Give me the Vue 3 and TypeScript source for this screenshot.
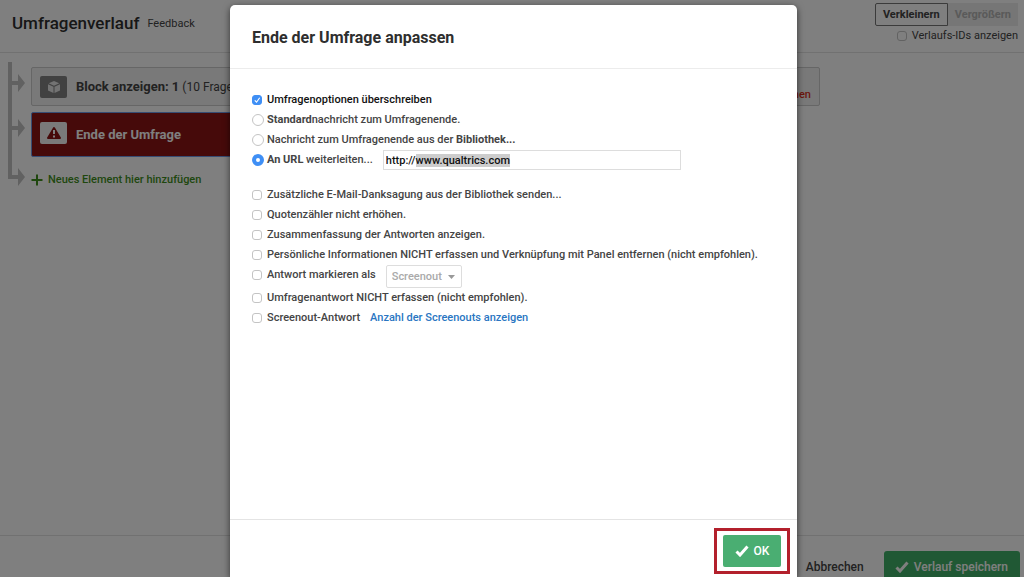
<script setup lang="ts">
import { nextTick, onMounted, ref } from 'vue'

type Target = 'standard' | 'library' | 'url'

interface Option {
  id: string
  label: string
  kind?: 'flag' | 'screenout'
}

const override = ref(true)
const target = ref<Target>('url')
const url = ref('http://www.qualtrics.com')
const urlInput = ref<HTMLInputElement | null>(null)
const flag = ref('Screenout')
const showIds = ref(false)
const checked = ref<string[]>([])

const options: Option[] = [
  { id: 'mail', label: 'Zusätzliche E-Mail-Danksagung aus der Bibliothek senden...' },
  { id: 'quota', label: 'Quotenzähler nicht erhöhen.' },
  { id: 'summary', label: 'Zusammenfassung der Antworten anzeigen.' },
  {
    id: 'anonymize',
    label: 'Persönliche Informationen NICHT erfassen und Verknüpfung mit Panel entfernen (nicht empfohlen).',
  },
  { id: 'flag', label: 'Antwort markieren als', kind: 'flag' },
  { id: 'discard', label: 'Umfragenantwort NICHT erfassen (nicht empfohlen).' },
  { id: 'screenout', label: 'Screenout-Antwort', kind: 'screenout' },
]

onMounted(async () => {
  await nextTick()
  const field = urlInput.value
  if (!field) return
  field.focus()
  field.setSelectionRange('http://'.length, field.value.length)
})
</script>

<template>
  <div class="app">
    <div class="page">
      <header class="page-head">
        <h1>Umfragenverlauf</h1>
        <a class="feedback" href="#">Feedback</a>
        <div class="tools">
          <div class="zoom">
            <button type="button" class="zoom-out">Verkleinern</button>
            <button type="button" class="zoom-in" disabled>Vergrößern</button>
          </div>
          <label class="ids"><input v-model="showIds" type="checkbox" />Verlaufs-IDs anzeigen</label>
        </div>
      </header>

      <main class="flow">
        <svg class="tree" width="18" height="126" viewBox="0 0 18 126" aria-hidden="true">
          <path
            fill="#c2c2c2"
            d="M0 0h4v19h6v-7l7 9-7 9v-7H4v41h6v-7l7 9-7 9v-7H4v45h6v-7l7 9-7 9v-7H0z"
          />
        </svg>
        <div class="elements">
          <section class="element">
            <span class="badge badge-block">
              <svg width="14" height="14" viewBox="0 0 14 14" aria-hidden="true">
                <path fill="#e6e6e6" d="M7 1l5.300 2.300L7 5.700 1.700 3.300zM1 4.300l5.500 2.500v6.200L1 10.400zM13 4.300L7.500 6.800V13L13 10.400z" />
              </svg>
            </span>
            <strong>Block anzeigen: 1</strong>
            <span class="count">(10 Fragen)</span>
            <a class="remove" href="#">Entfernen</a>
          </section>
          <section class="element element-end">
            <span class="badge badge-end">
              <svg width="16" height="14" viewBox="0 0 16 14" aria-hidden="true">
                <path fill="#8c1414" stroke="#8c1414" stroke-width="2" stroke-linejoin="round" d="M8 2l6 10H2z" />
                <path stroke="#fff" stroke-width="2" d="M8 4v4M8 9.500v2" />
              </svg>
            </span>
            <strong>Ende der Umfrage</strong>
          </section>
          <button type="button" class="add">
            <svg width="12" height="12" viewBox="0 0 12 12" aria-hidden="true">
              <path stroke="#3f8f1c" stroke-width="2" d="M6 0.500v11M0.500 6h11" />
            </svg>
            Neues Element hier hinzufügen
          </button>
        </div>
      </main>

      <footer class="page-foot">
        <button type="button" class="cancel">Abbrechen</button>
        <button type="button" class="save">
          <svg width="14" height="12" viewBox="0 0 14 12" aria-hidden="true">
            <path fill="none" stroke="#fff" stroke-width="3" d="M1.500 6.500l3.500 3.500 7.500-8.500" />
          </svg>
          Verlauf speichern
        </button>
      </footer>
    </div>

    <div class="overlay">
      <div class="dialog" role="dialog" aria-modal="true" aria-labelledby="dialog-title">
        <h2 id="dialog-title">Ende der Umfrage anpassen</h2>
        <form class="body" @submit.prevent>
          <label class="row row-strong"><input v-model="override" type="checkbox" />Umfragenoptionen überschreiben</label>
          <label class="row">
            <input v-model="target" type="radio" name="target" value="standard" />
            <span><b>Standard</b>nachricht zum Umfragenende.</span>
          </label>
          <label class="row">
            <input v-model="target" type="radio" name="target" value="library" />
            <span>Nachricht zum Umfragenende aus der <b>Bibliothek...</b></span>
          </label>
          <div class="row">
            <label class="choice">
              <input v-model="target" type="radio" name="target" value="url" />
              <span><b>An URL</b> weiterleiten...</span>
            </label>
            <input ref="urlInput" v-model="url" class="url" type="text" aria-label="URL" />
          </div>

          <div class="options">
            <div v-for="option in options" :key="option.id" class="row">
              <label class="choice">
                <input v-model="checked" type="checkbox" :value="option.id" />{{ option.label }}
              </label>
              <span v-if="option.kind === 'flag'" class="picker">
                <select v-model="flag" disabled aria-label="Markierung">
                  <option>Screenout</option>
                </select>
                <svg width="7" height="4" viewBox="0 0 7 4" aria-hidden="true"><path fill="#999" d="M0 0h7L3.500 4z" /></svg>
              </span>
              <a v-if="option.kind === 'screenout'" class="link" href="#">Anzahl der Screenouts anzeigen</a>
            </div>
          </div>
        </form>
        <div class="dialog-foot">
          <div class="marker">
            <button type="button" class="ok">
              <svg width="14" height="12" viewBox="0 0 14 12" aria-hidden="true">
                <path fill="none" stroke="#fff" stroke-width="3" d="M1.500 6.500l3.500 3.500 7.500-8.500" />
              </svg>
              OK
            </button>
          </div>
        </div>
      </div>
    </div>
  </div>
</template>

<style>
body {
  margin: 0;
  overflow: hidden;
}
</style>

<style scoped>
* {
  box-sizing: border-box;
}
.app {
  position: relative;
  font-family: Roboto, 'Liberation Sans', sans-serif;
  font-size: 11px;
  font-weight: 500;
  line-height: 20px;
  color: #444;
}
button,
input,
select {
  font: inherit;
  color: inherit;
  margin: 0;
}
button {
  border: 0;
  background: none;
  padding: 0;
}
a {
  text-decoration: none;
  color: inherit;
}
h1,
h2 {
  margin: 0;
  color: #2e2e2e;
}
input[type='checkbox'],
input[type='radio'] {
  appearance: none;
  flex: none;
  width: 10px;
  height: 10px;
  margin-right: 1px;
  border: 1px solid #c4c4c4;
  border-radius: 3px;
  background: #fff;
}
input[type='radio'] {
  width: 12px;
  height: 12px;
  margin-right: -1px;
  border-radius: 50%;
}
input[type='radio']:checked {
  border: 4px solid #3f8ff5;
}
input[type='checkbox']:checked {
  border-color: #3f8ff5;
  background: #3f8ff5
    url("data:image/svg+xml,%3Csvg xmlns='http://www.w3.org/2000/svg' viewBox='0 0 9 9'%3E%3Cpath d='M2 5l2 2 3.500-5' fill='none' stroke='white' stroke-width='1.300'/%3E%3C/svg%3E");
}

.page {
  display: flex;
  flex-direction: column;
  min-height: 100vh;
  background: #fff;
}
.page-head {
  display: flex;
  align-items: flex-start;
  padding: 3px 6px 6px 12px;
  border-bottom: 1px solid #e2e2e2;
}
h1 {
  font-size: 17px;
  font-weight: 500;
  line-height: 40px;
}
.feedback {
  margin-left: 8px;
  font-weight: 400;
  line-height: 41px;
}
.tools {
  display: flex;
  flex-direction: column;
  align-items: flex-end;
  margin-left: auto;
}
.zoom {
  display: flex;
  font-weight: 700;
}
.zoom-out {
  height: 23px;
  padding: 0 7px;
  border: 1px solid #777;
  border-radius: 2px 0 0 2px;
}
.zoom-in {
  height: 23px;
  padding: 0 7px;
  background: #ececec;
  color: #b4b4b4;
}
.ids {
  display: flex;
  align-items: center;
  gap: 4px;
  font-weight: 400;
}
.page-foot {
  display: flex;
  align-items: flex-end;
  justify-content: flex-end;
  gap: 20px;
  height: 42px;
  padding-right: 4px;
  border-top: 1px solid #e2e2e2;
  font-size: 12px;
}
.cancel {
  height: 26px;
  padding-top: 5px;
}
.save {
  display: flex;
  align-items: center;
  gap: 5px;
  height: 26px;
  padding: 5px 12px 0 11px;
  border-radius: 3px 3px 0 0;
  background: #41b169;
  color: #fff;
}

.flow {
  display: flex;
  flex: 1;
  align-items: flex-start;
  gap: 5px;
  padding: 9px 8px;
}
.tree {
  flex: none;
}
.elements {
  display: flex;
  flex-direction: column;
  align-items: flex-start;
  gap: 6px;
  width: 789px;
  padding-top: 5px;
}
.element {
  display: flex;
  align-items: center;
  width: 100%;
  height: 39px;
  padding: 0 8px;
  border: 1px solid #ccc;
  border-radius: 2px;
  background: #f2f2f2;
}
.element strong {
  margin: 0 3px 0 9px;
  font-size: 13px;
  font-weight: 700;
}
.count {
  font-weight: 400;
  font-size: 12px;
}
.remove {
  align-self: flex-end;
  margin-left: auto;
  color: #d9301a;
}
.element-end {
  width: 700px;
  height: 45px;
  border: 1px solid #6f9ae8;
  background: #8c1414;
  color: #fff;
}
.badge {
  display: flex;
  align-items: center;
  justify-content: center;
  width: 27px;
  height: 22px;
  border-radius: 2px;
}
.badge-block {
  background: #828282;
}
.badge-end {
  margin-bottom: 4px;
  background: #f4f4f4;
}
.add {
  display: flex;
  align-items: center;
  gap: 5px;
  height: 34px;
  color: #3f8f1c;
}

.overlay {
  position: absolute;
  inset: 0;
  display: grid;
  grid-template-columns: 230fr 567px 227fr;
  padding-top: 5px;
  background: rgba(0, 0, 0, 0.5);
}
.dialog {
  grid-column: 2;
  display: flex;
  flex-direction: column;
  border-radius: 5px 5px 0 0;
  background: #fff;
  box-shadow: 0 2px 7px rgba(0, 0, 0, 0.6);
}
h2 {
  padding: 3px 22px 0;
  border-bottom: 1px solid #ececec;
  font-size: 16px;
  font-weight: 700;
  line-height: 60px;
}
.body {
  flex: 1;
  padding: 21px 22px 0;
}
.row {
  display: flex;
  align-items: flex-start;
  gap: 4px;
  min-height: 20px;
  white-space: nowrap;
}
label.row,
.choice {
  display: flex;
  align-items: center;
  gap: 4px;
  height: 20px;
}
.row-strong {
  color: #111;
}
b {
  font-weight: 700;
}
.url {
  width: 298px;
  height: 20px;
  margin-left: 6px;
  padding: 0 2px;
  border: 1px solid #ddd;
  outline: 0;
  line-height: 15px;
  color: #111;
  caret-color: transparent;
}
.url::selection {
  background: #cdcdcd;
  color: #111;
}
.options {
  padding-top: 15px;
}
.picker {
  display: grid;
  align-items: center;
  margin-left: 6px;
}
.picker select,
.picker svg {
  grid-area: 1 / 1;
}
.picker svg {
  justify-self: end;
  margin-right: 7px;
}
.picker select {
  appearance: none;
  width: 76px;
  height: 23px;
  padding: 0 5px;
  border: 1px solid #ddd;
  border-radius: 2px;
  background: #fff;
  color: #aaa;
  opacity: 1;
}
.link {
  margin-left: 6px;
  color: #2a76c2;
}
.dialog-foot {
  display: flex;
  justify-content: flex-end;
  padding: 8px 7px 3px;
  border-top: 1px solid #e4e4e4;
}
.marker {
  padding: 4px 6px;
  border: 3px solid #b3202c;
}
.ok {
  display: flex;
  align-items: center;
  justify-content: center;
  gap: 5px;
  width: 58px;
  height: 32px;
  border-radius: 2px;
  background: #4aae72;
  color: #fff;
  font-size: 12px;
}
</style>
